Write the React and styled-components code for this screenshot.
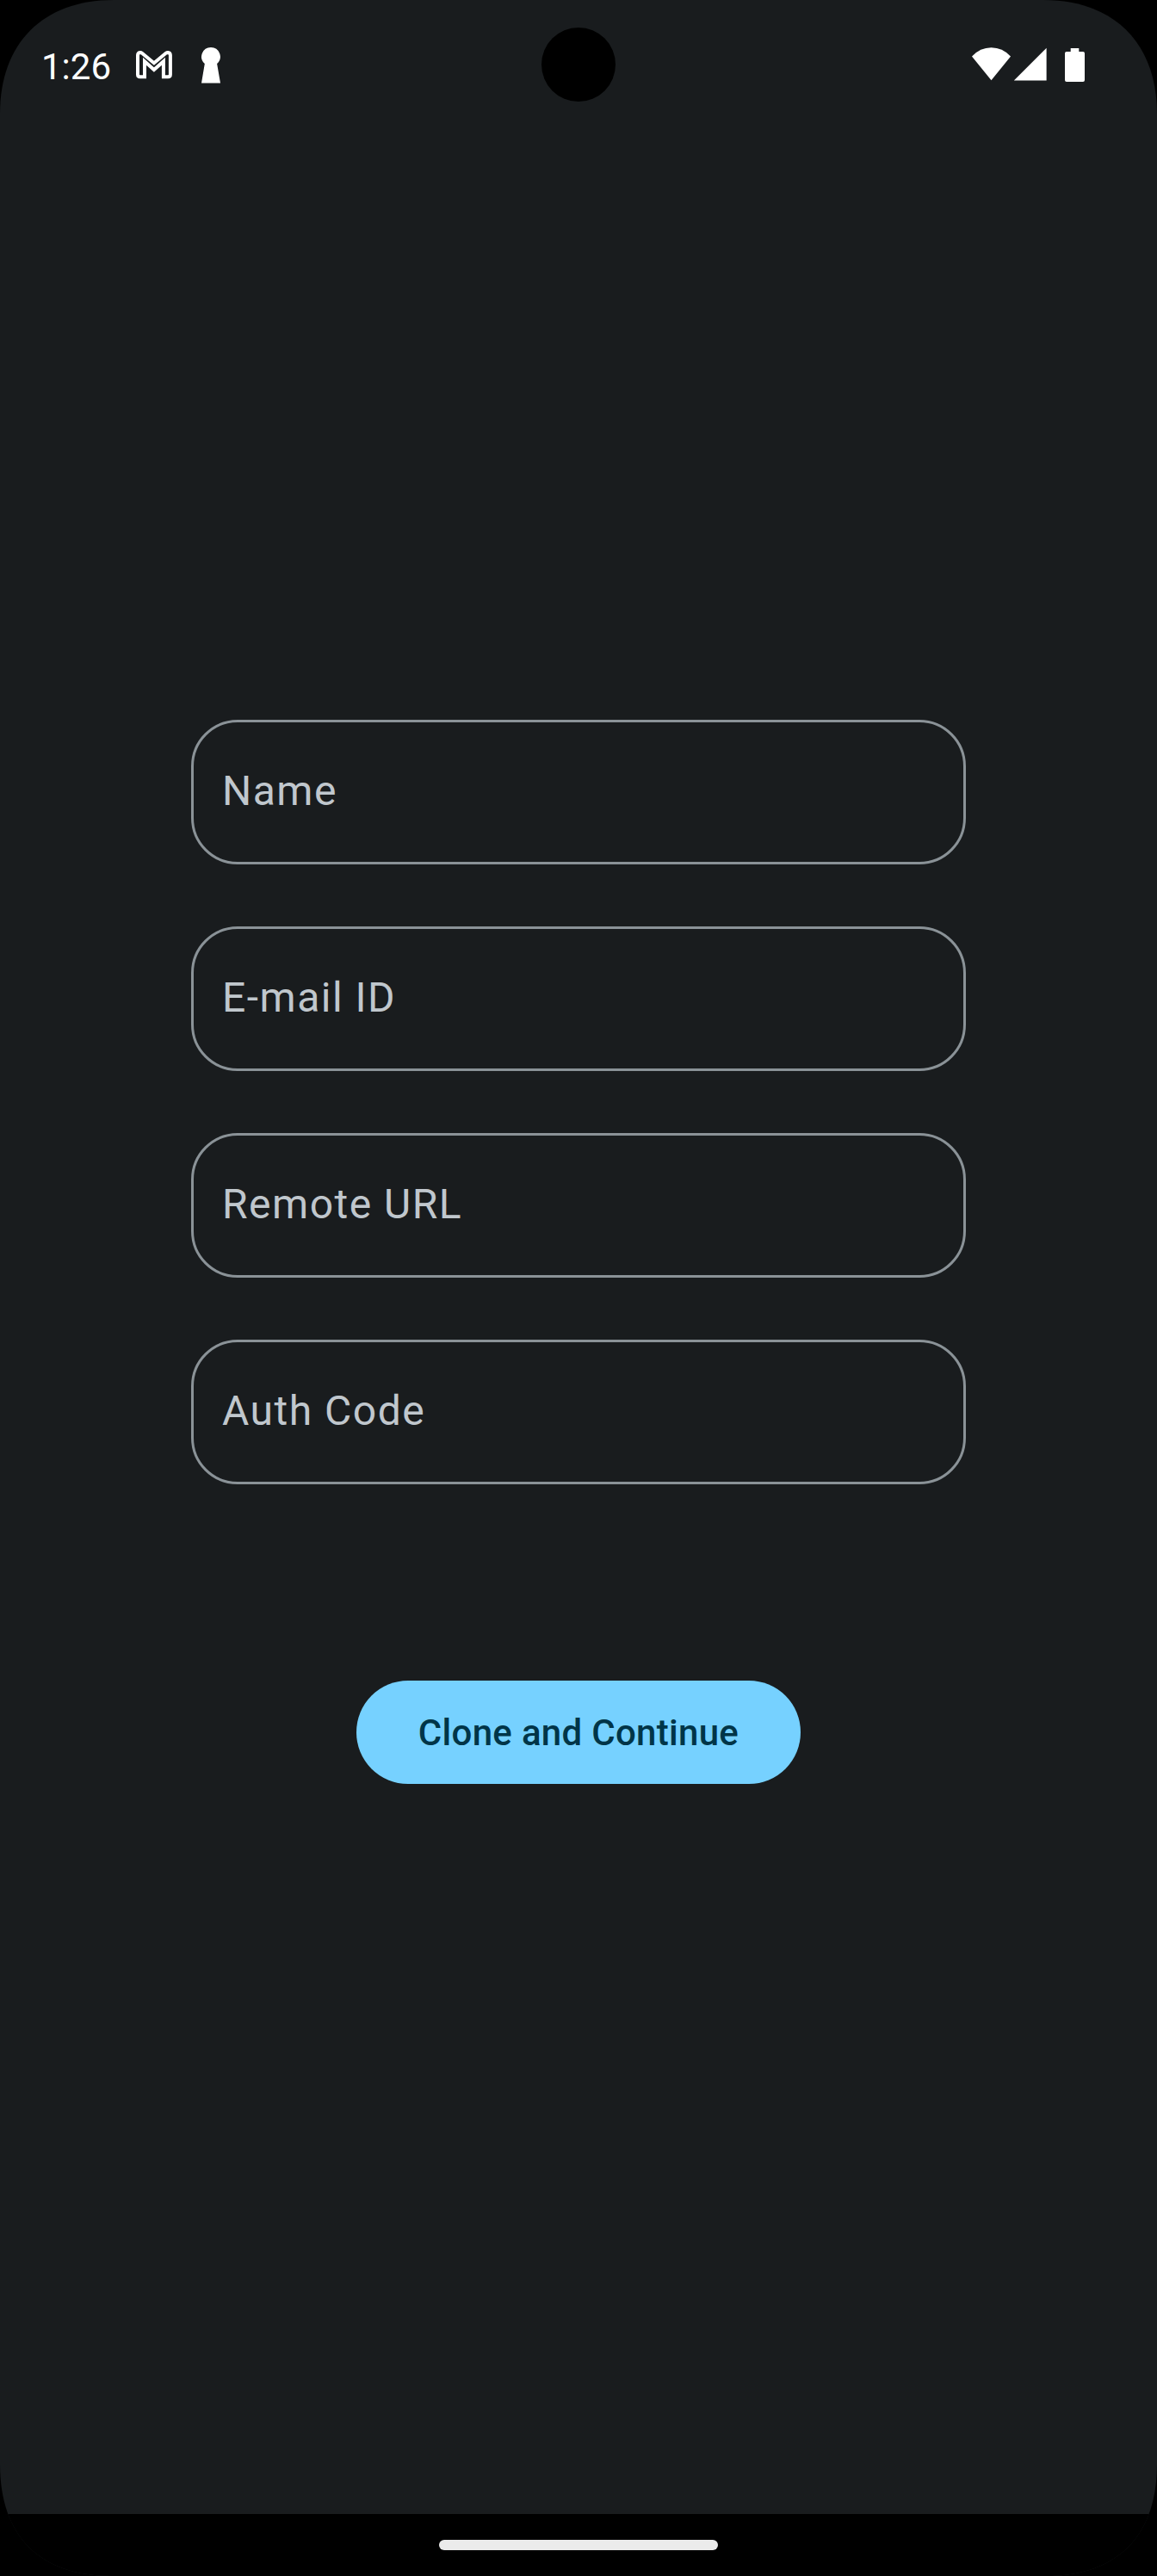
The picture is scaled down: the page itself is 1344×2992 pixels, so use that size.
import React from "react";
import styled, { createGlobalStyle } from "styled-components";

const GlobalStyle = createGlobalStyle`
  * { box-sizing: border-box; }
  html, body { margin: 0; background: #000; }
  body { font-family: Roboto, "Liberation Sans", sans-serif; }
`;

const Screen = styled.div`
  position: relative;
  width: 1344px;
  height: 2992px;
  display: flex;
  flex-direction: column;
  overflow: hidden;
  clip-path: path("M0 132C0 50 50 0 132 0H1212C1294 0 1344 50 1344 132V2862C1344 2946 1298 2992 1214 2992H130C46 2992 0 2946 0 2862Z");
  background: #191c1e;
`;

const StatusBar = styled.header`
  display: flex;
  justify-content: space-between;
  height: 150px;
  padding: 0 84px 0 48px;
  color: #fff;
`;

const StatusGroup = styled.div`
  display: flex;
  align-items: flex-start;
  padding-top: 52px;

  svg {
    display: block;
    fill: currentColor;
  }
`;

const Clock = styled.span`
  width: 110px;
  font-size: 42px;
  line-height: 52px;
`;

const Camera = styled.div`
  position: absolute;
  top: 31.5px;
  left: 628.75px;
  width: 86.5px;
  height: 86.5px;
  border-radius: 50%;
  background: #000;
`;

const Main = styled.main`
  flex: 1;
  display: flex;
  flex-direction: column;
  align-items: center;
  padding-top: 686px;
`;

const Form = styled.form`
  display: flex;
  flex-direction: column;
  align-items: center;
  gap: 72px;
`;

const Field = styled.label`
  display: flex;
  align-items: center;
  width: 900px;
  height: 168px;
  padding: 0 33px 2px;
  border: 3px solid #8a9297;
  border-radius: 54px;
  color: #c0c7cd;
  font-size: 48px;
  line-height: 72px;
  letter-spacing: 1.5px;
`;

const SubmitButton = styled.button`
  width: 516px;
  height: 120px;
  margin-top: 156px;
  padding: 2px 0 0;
  border: 0;
  border-radius: 60px;
  background: #76d1ff;
  color: #003548;
  font-family: inherit;
  font-size: 42px;
  font-weight: 500;
  line-height: 60px;
  letter-spacing: 0.3px;
`;

const NavigationBar = styled.footer`
  display: flex;
  justify-content: center;
  height: 72px;
  padding-top: 30px;
  background: #000;
`;

const HomeHandle = styled.div`
  width: 324px;
  height: 12px;
  border-radius: 6px;
  background: #ebebeb;
`;

const fields = ["Name", "E-mail ID", "Remote URL", "Auth Code"];

const MailIcon = () => (
  <svg width="42" height="50" viewBox="158 52 42 50">
    <path
      d="M160 64.2v22.3q0 2.7 2.7 2.7h5.3V71.2l10.9 9.8 11-9.8v18h5.2q2.8 0 2.8-2.7V64.2q0-3-2.8-3.3-1.3 0-2.4.9L178.9 73.2 165 61.8q-1.1-.9-2.4-.8-2.6.4-2.6 3.2z"
      fill="none"
      stroke="currentColor"
      strokeWidth="4"
      strokeLinejoin="miter"
    />
  </svg>
);

const KeyholeIcon = () => (
  <svg width="56" height="50" viewBox="200 52 56 50">
    <path d="M245 55a10.9 10.9 0 0 0-7.2 19.1L234 96.4h22l-3.9-22.3A10.9 10.9 0 0 0 245 55z" />
  </svg>
);

const WifiIcon = () => (
  <svg width="45" height="50" viewBox="1129 52 45 50">
    <path d="M1129 65.5Q1138.5 55.3 1151.5 55.3T1174 65.5L1151.5 93.2z" />
  </svg>
);

const SignalIcon = () => (
  <svg width="42" height="50" viewBox="1174 52 42 50">
    <path d="M1215.6 55.7V93.4H1177.8z" />
  </svg>
);

const BatteryIcon = () => (
  <svg width="44" height="50" viewBox="1216 52 44 50">
    <path d="M1243.7 56h9.6v4h4.7q2 0 2 2v31q0 2-2 2h-19q-2 0-2-2V62q0-2 2-2h4.7z" />
  </svg>
);

export default function App() {
  return (
    <>
      <GlobalStyle />
      <Screen>
        <StatusBar>
          <StatusGroup>
            <Clock>1:26</Clock>
            <MailIcon />
            <KeyholeIcon />
          </StatusGroup>
          <StatusGroup>
            <WifiIcon />
            <SignalIcon />
            <BatteryIcon />
          </StatusGroup>
        </StatusBar>
        <Camera />
        <Main>
          <Form onSubmit={(event) => event.preventDefault()}>
            {fields.map((label) => (
              <Field key={label}>{label}</Field>
            ))}
            <SubmitButton type="submit">Clone and Continue</SubmitButton>
          </Form>
        </Main>
        <NavigationBar>
          <HomeHandle />
        </NavigationBar>
      </Screen>
    </>
  );
}
